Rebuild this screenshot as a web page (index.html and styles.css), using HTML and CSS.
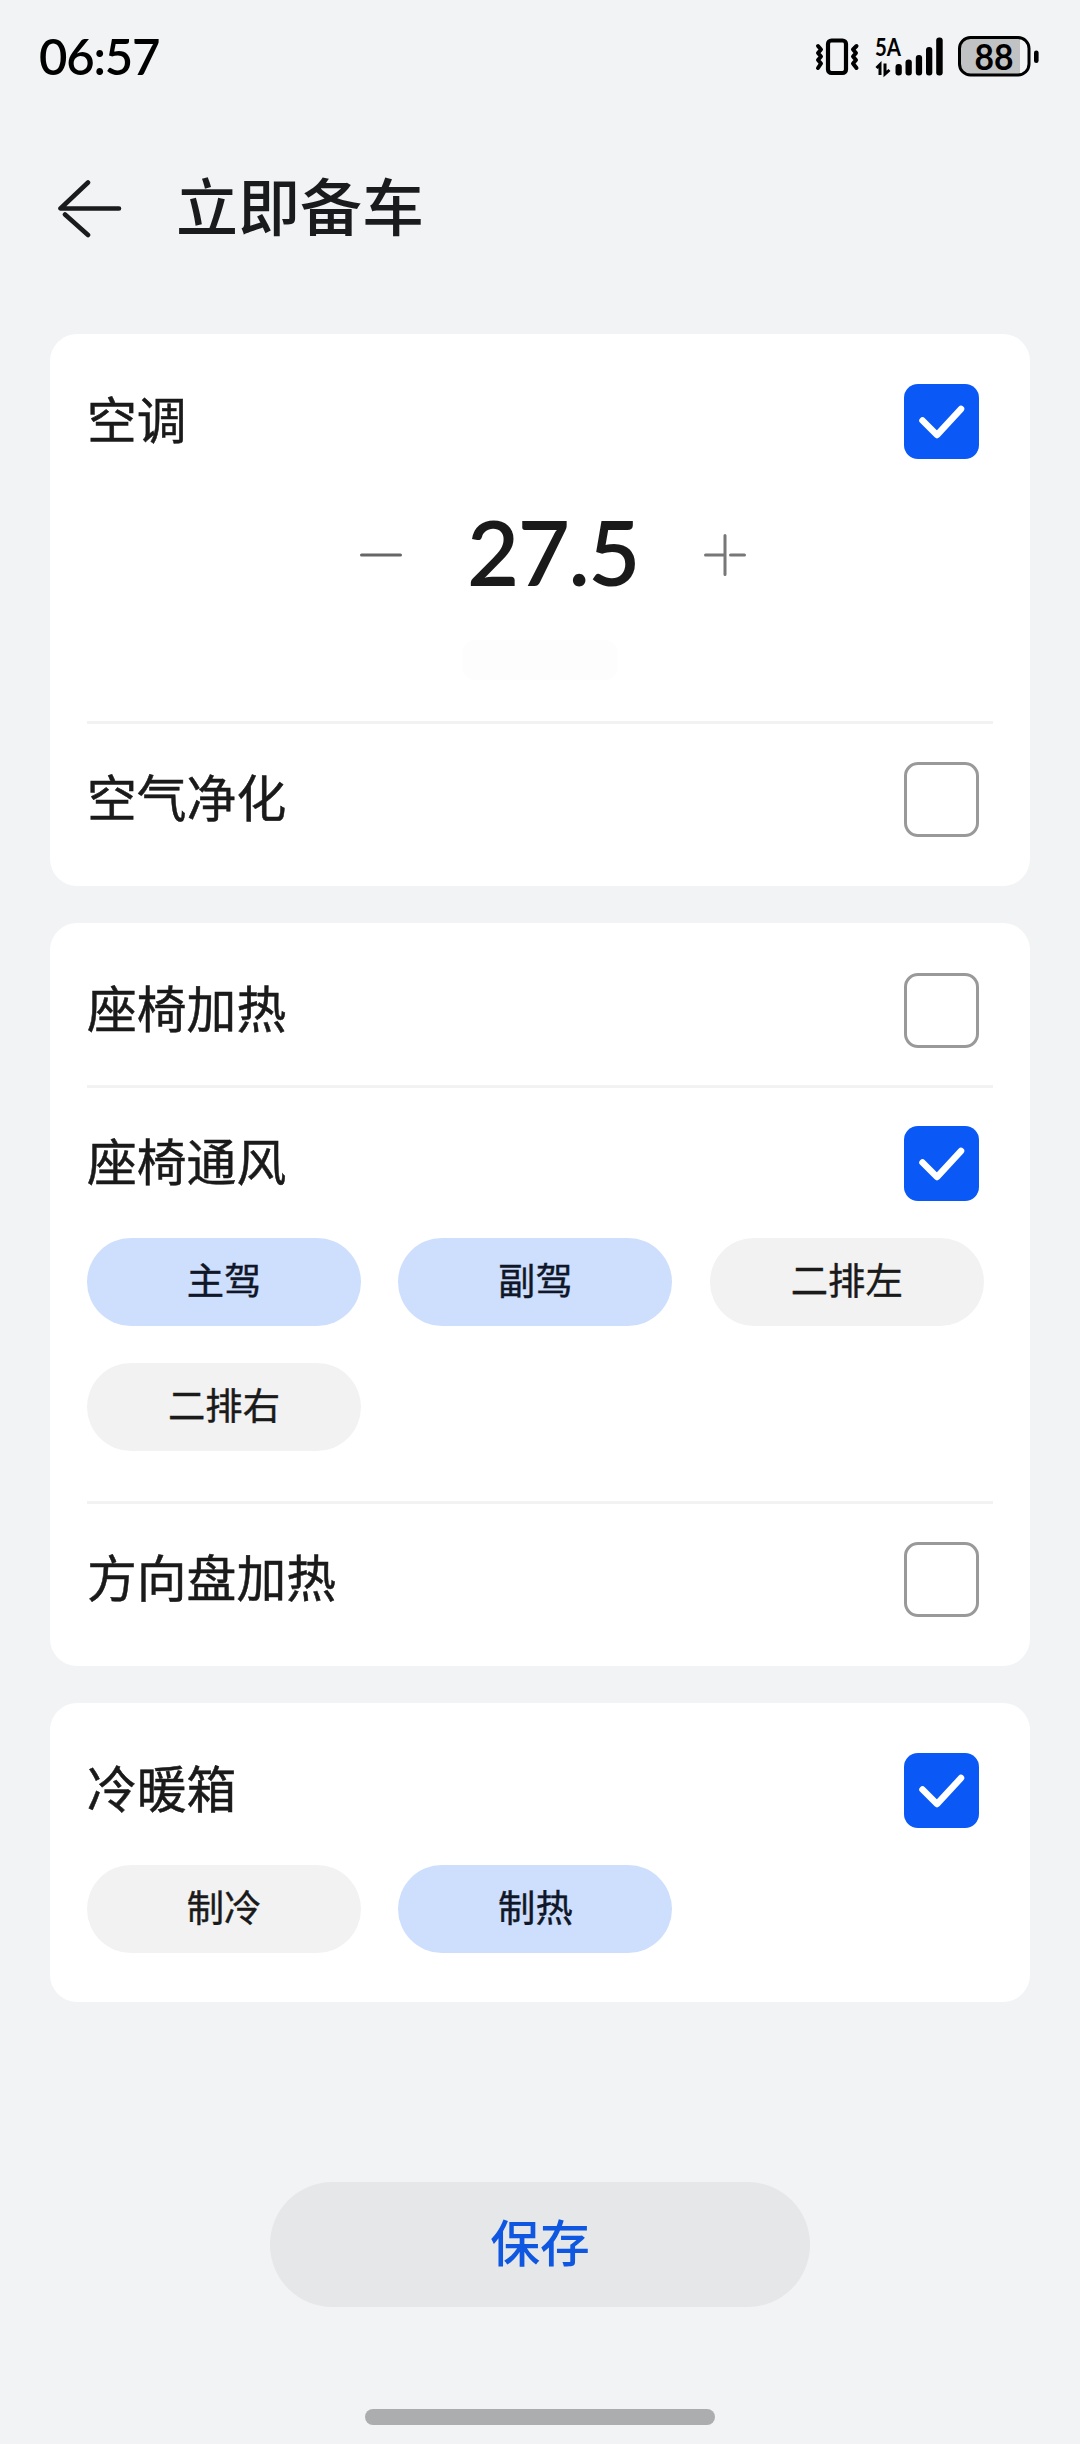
FILE: index.html
```
<!DOCTYPE html>
<html lang="zh-CN">
<head>
    <meta charset="UTF-8" />
    <meta name="viewport" content="width=device-width, initial-scale=1.0" />
    <title>立即备车</title>
    <link rel="stylesheet" href="styles.css">
</head>
<body>

    <!-- Status bar -->
    <div class="status-bar">
        <span class="time">06:57</span>
        <div class="status-icons">
            <svg class="icon-vibrate" viewBox="0 -10 46 62" width="46" height="62">
                <rect x="13" y="4.5" width="18" height="32.5" rx="3.5" fill="none" stroke="#000" stroke-width="4.2" />
                <path d="M3 10 L6 13.5 L3 17 L6 20.5 L3 24 L6 27.5 L3 32" fill="none" stroke="#000" stroke-width="4" stroke-linecap="round" stroke-linejoin="round" />
                <path d="M41.5 10 L38 13.5 L41 17 L38 20.5 L41 24 L38 27.5 L41.5 32" fill="none" stroke="#000" stroke-width="4" stroke-linecap="round" stroke-linejoin="round" />
            </svg>
            <svg class="icon-signal" viewBox="0 -10 69 62" width="69" height="62">
                <text x="0" y="19.5" class="network" textLength="26" lengthAdjust="spacingAndGlyphs">5A</text>
                <path d="M1.500 32 L5 28.500 V39 M10 27.500 V38 L14.500 34" fill="none" stroke="#000" stroke-width="3" />
                <rect x="20.500" y="28" width="6.300" height="11.500" rx="3" />
                <rect x="30.500" y="23.500" width="6.300" height="16" rx="3" />
                <rect x="40.800" y="19" width="6.300" height="20.500" rx="3" />
                <rect x="51" y="11" width="6.300" height="28.500" rx="3" />
                <rect x="61.200" y="1.500" width="6.500" height="38" rx="3" />
            </svg>
            <svg class="icon-battery" viewBox="0 -10 81 62" width="81" height="62">
                <path d="M12 1.500 H62 V39 H12 A10.500 10.500 0 0 1 1.500 28.500 V12 A10.500 10.500 0 0 1 12 1.500 Z" fill="#c1c2c3" />
                <rect x="1.500" y="1.500" width="69.500" height="37.500" rx="11" fill="none" stroke="#000" stroke-width="3" />
                <rect x="76" y="14.500" width="4.600" height="12.500" rx="2.300" />
                <text x="36" y="33.500" class="level" text-anchor="middle" textLength="39" lengthAdjust="spacingAndGlyphs">88</text>
            </svg>
        </div>
    </div>

    <!-- Page header -->
    <div class="header">
        <svg class="back-icon" viewBox="0 0 66 60" width="66" height="60">
            <path d="M31 4.500 L3.500 30.500 H62 M8 36.500 L31 57" fill="none" stroke="#1a1b1d" stroke-width="4.600" stroke-linecap="round" stroke-linejoin="round" />
        </svg>
        <h1>立即备车</h1>
    </div>

    <div class="container">
        <div class="card">
            <div class="row">
                <span class="label">空调</span>
                <span class="checkbox checked"><svg viewBox="0 0 75 75"><path d="M18.500 36.500 L33 51 L57 25" /></svg></span>
            </div>
            <div class="stepper">
                <svg class="step-btn" viewBox="0 0 42 42"><path d="M1.500 21 H40.500" /></svg>
                <span class="temp">27.5</span>
                <svg class="step-btn plus" viewBox="0 0 42 42"><path d="M1.500 21 H20 M26.500 21 H40.500 M21 1.500 V40.500" /></svg>
            </div>
            <div class="temp-hint"></div>
            <div class="divider"></div>
            <div class="row">
                <span class="label">空气净化</span>
                <span class="checkbox"></span>
            </div>
        </div>

        <div class="card">
            <div class="row">
                <span class="label">座椅加热</span>
                <span class="checkbox"></span>
            </div>
            <div class="divider"></div>
            <div class="row">
                <span class="label">座椅通风</span>
                <span class="checkbox checked"><svg viewBox="0 0 75 75"><path d="M18.500 36.500 L33 51 L57 25" /></svg></span>
            </div>
            <div class="chips">
                <button class="chip active">主驾</button>
                <button class="chip active">副驾</button>
                <button class="chip">二排左</button>
                <button class="chip">二排右</button>
            </div>
            <div class="divider after-chips"></div>
            <div class="row">
                <span class="label">方向盘加热</span>
                <span class="checkbox"></span>
            </div>
        </div>

        <div class="card">
            <div class="row">
                <span class="label">冷暖箱</span>
                <span class="checkbox checked"><svg viewBox="0 0 75 75"><path d="M18.500 36.500 L33 51 L57 25" /></svg></span>
            </div>
            <div class="chips">
                <button class="chip">制冷</button>
                <button class="chip active">制热</button>
            </div>
        </div>
    </div>

    <button class="save-btn">保存</button>
    <div class="home-bar"></div>

</body>
</html>
```
FILE: styles.css
```
/* Global styles */
* {
    box-sizing: border-box;
}

body {
    margin: 0;
    height: 2444px;
    display: flex;
    flex-direction: column;
    background-color: #f1f3f5;
    color: #1a1a1a;
    font-family: "Noto Sans CJK SC", sans-serif;
}

button {
    border: none;
    padding: 0;
    font-family: inherit;
    cursor: pointer;
}

/* Status bar */
.status-bar {
    display: flex;
    justify-content: space-between;
    align-items: center;
    height: 114px;
    padding: 0 41px 0 39px;
    color: #000;
}

.time {
    padding-bottom: 3px;
    font-family: Lato, sans-serif;
    font-size: 49px;
    font-weight: 600;
    line-height: 60px;
    letter-spacing: -1.2px;
}

.status-icons {
    display: flex;
    gap: 14px;
}

.network {
    font-family: Lato, sans-serif;
    font-size: 24px;
    font-weight: 700;
}

.level {
    font-family: Lato, sans-serif;
    font-size: 36px;
    font-weight: 700;
}

/* Header */
.header {
    display: flex;
    align-items: center;
    gap: 53px;
    height: 190px;
    padding: 0 57px 2px;
}

h1 {
    margin: 0;
    padding-bottom: 8px;
    font-size: 62px;
    font-weight: 500;
    line-height: 80px;
    color: #1a1b1d;
}

/* Cards */
.container {
    display: flex;
    flex-direction: column;
    gap: 37px;
    padding: 30px 50px 0;
}

.card {
    padding: 50px 37px 49px;
    background: white;
    border-radius: 27px;
}

.row {
    display: flex;
    justify-content: space-between;
    align-items: center;
    height: 75px;
    padding-right: 14px;
}

.label {
    padding-bottom: 10px;
    font-size: 49.8px;
    line-height: 64px;
    -webkit-text-stroke: 0.5px;
}

.checkbox {
    width: 75px;
    height: 75px;
    border: 3px solid #999;
    border-radius: 14px;
}

.checkbox.checked {
    border: none;
    background-color: #0a59f7;
}

.checkbox svg {
    display: block;
    fill: none;
    stroke: white;
    stroke-width: 6.5;
    stroke-linecap: round;
    stroke-linejoin: round;
}

.divider {
    height: 3px;
    margin: 37px 0 38px;
    background-color: #f2f2f2;
}

.divider.after-chips {
    margin-top: 50px;
}

/* Temperature */
.stepper {
    display: flex;
    align-items: center;
    height: 112px;
    margin-top: 40px;
    padding-left: 273px;
}

.step-btn {
    width: 42px;
    height: 42px;
    fill: none;
    stroke: #666;
    stroke-width: 3;
    stroke-linecap: round;
}

.step-btn.plus {
    stroke: #777;
}

.temp {
    width: 302px;
    padding-bottom: 7px;
    text-align: center;
    font-family: Lato, sans-serif;
    font-size: 90px;
    font-weight: 600;
    line-height: 105px;
    letter-spacing: -1.5px;
}

.temp-hint {
    width: 154px;
    height: 40px;
    margin: 29px 0 0 376px;
    background-color: #fdfdfd;
    border-radius: 12px;
}

.temp-hint + .divider {
    margin-top: 41px;
}

/* Chips */
.chips {
    display: grid;
    grid-template-columns: repeat(3, 274px);
    column-gap: 37.4px;
    row-gap: 37px;
    margin-top: 37px;
}

.chip {
    height: 88px;
    padding-bottom: 6px;
    border-radius: 44px;
    background-color: #f2f2f2;
    color: #1a1a1a;
    font-size: 37.3px;
    line-height: 50px;
    -webkit-text-stroke: 0.4px;
}

.chip.active {
    background-color: #cedefd;
    color: #0f1728;
}

/* Bottom */
.save-btn {
    align-self: center;
    width: 540px;
    height: 125px;
    margin-top: 180px;
    padding-bottom: 10px;
    border-radius: 63px;
    background-color: #e5e7e9;
    color: #0f57e0;
    font-size: 49.8px;
    font-weight: 500;
    line-height: 70px;
}

.home-bar {
    align-self: center;
    width: 350px;
    height: 16px;
    margin-top: 102px;
    border-radius: 8px;
    background-color: #abadaf;
}
```
